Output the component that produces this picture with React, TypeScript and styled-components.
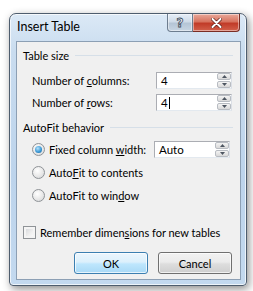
import React from 'react';
import styled, { createGlobalStyle } from 'styled-components';

const GlobalStyle = createGlobalStyle`
  html, body {
    margin: 0;
    padding: 0;
    background: #ffffff;
    overflow: hidden;
  }
  body {
    font-family: Lato, 'Open Sans', sans-serif;
    font-size: 11px;
    color: #000;
  }
`;

const Page = styled.div`
  width: 253px;
  height: 291px;
  padding: 13px 0 0 9px;
  box-sizing: border-box;
`;

const Window = styled.div`
  width: 238px;
  height: 273px;
  box-sizing: border-box;
  border: 1px solid #4e5d6e;
  border-radius: 7px 7px 4px 4px;
  background: linear-gradient(180deg, #dce9f6 0%, #c9dcef 14%, #bdd4ec 60%, #c3d9ef 100%);
  box-shadow: 2px 3px 8px rgba(0, 0, 0, 0.45), inset 0 0 0 1px rgba(255, 255, 255, 0.7);
  display: flex;
  flex-direction: column;
  overflow: hidden;
`;

const TitleBar = styled.div`
  height: 27px;
  flex: none;
  display: flex;
  align-items: flex-start;
  justify-content: space-between;
  padding: 0 6px 0 7px;
`;

const Title = styled.div`
  font-size: 12.5px;
  line-height: 14px;
  margin-top: 6px;
  color: #000;
`;

const CaptionButtons = styled.div`
  display: flex;
`;

const CaptionButton = styled.div<{ $close?: boolean }>`
  width: ${(p) => (p.$close ? 47 : 26)}px;
  height: 18px;
  box-sizing: border-box;
  display: flex;
  align-items: center;
  justify-content: center;
  border: 1px solid ${(p) => (p.$close ? '#7a2d24' : '#6d7d8f')};
  border-top: none;
  border-left-width: ${(p) => (p.$close ? 0 : 1)}px;
  border-radius: ${(p) => (p.$close ? '0 0 4px 0' : '0 0 0 4px')};
  background: ${(p) =>
    p.$close
      ? 'linear-gradient(180deg, #e9a99b 0%, #d7735f 45%, #c13b28 55%, #d2604b 100%)'
      : 'linear-gradient(180deg, #e6eef7 0%, #cfdbe8 45%, #b5c5d6 55%, #c7d5e3 100%)'};
  box-shadow: inset 0 0 0 1px rgba(255, 255, 255, 0.45);
`;

const HelpGlyph = styled.span`
  font-family: 'DejaVu Sans', sans-serif;
  font-weight: bold;
  font-size: 12px;
  line-height: 12px;
  color: #f4f7fa;
  -webkit-text-stroke: 0.8px #3c4a5a;
`;

const Client = styled.div`
  flex: 1;
  min-height: 0;
  margin: 0 5px 5px 6px;
  border: 1px solid #8c9fb4;
  background: #f0f0f0;
  display: flex;
  flex-direction: column;
  padding: 6px 7px 0 6px;
`;

const GroupHeader = styled.div<{ $top: number }>`
  display: flex;
  align-items: center;
  gap: 6px;
  margin-top: ${(p) => p.$top}px;
  height: 14px;
  white-space: nowrap;
  &::after {
    content: '';
    flex: 1;
    height: 1px;
    background: #d6dfe8;
  }
`;

const FieldRow = styled.div<{ $top: number }>`
  display: flex;
  align-items: center;
  margin-top: ${(p) => p.$top}px;
  padding-left: 9px;
  height: 17px;
`;

const FieldLabel = styled.span`
  width: 124px;
  white-space: nowrap;
`;

const RadioRow = styled.div<{ $top: number }>`
  display: flex;
  align-items: center;
  margin-top: ${(p) => p.$top}px;
  padding-left: 9px;
  height: 17px;
`;

const RadioLabel = styled.span<{ $width?: number }>`
  width: ${(p) => (p.$width ? `${p.$width}px` : 'auto')};
  margin-left: 4px;
  white-space: nowrap;
`;

const Radio = styled.span<{ $checked?: boolean }>`
  width: 13px;
  height: 13px;
  box-sizing: border-box;
  border-radius: 50%;
  border: 1px solid #8f9397;
  background: radial-gradient(circle at 40% 35%, #ffffff 0%, #e8e8e8 55%, #cfd2d5 100%);
  display: flex;
  align-items: center;
  justify-content: center;
  flex: none;
  &::after {
    content: '';
    display: ${(p) => (p.$checked ? 'block' : 'none')};
    width: 7px;
    height: 7px;
    border-radius: 50%;
    background: radial-gradient(circle at 40% 35%, #b7e2fb 0%, #3d9ad6 55%, #0f5a92 100%);
  }
`;

const CheckRow = styled.div`
  display: flex;
  align-items: center;
  margin-top: 20px;
  height: 17px;
`;

const CheckLabel = styled.span`
  white-space: nowrap;
`;

const CheckBox = styled.span`
  width: 13px;
  height: 13px;
  box-sizing: border-box;
  border: 1px solid #8f9397;
  background: linear-gradient(135deg, #cfd2d6 0%, #f0f0f0 60%, #ffffff 100%);
  box-shadow: inset 0 0 0 2px #f4f4f4;
  flex: none;
  margin-right: 4px;
`;

const SpinBox = styled.div`
  width: 76px;
  height: 17px;
  box-sizing: border-box;
  border: 1px solid #abadb3;
  border-bottom-color: #e3e9ef;
  border-right-color: #dbdfe6;
  background: #fff;
  display: flex;
  align-items: center;
  padding-left: 4px;
  flex: none;
  font-size: 11.5px;
`;

const SpinValue = styled.div`
  flex: 1;
  display: flex;
  align-items: center;
`;

const Caret = styled.span`
  width: 1px;
  height: 12px;
  background: #000;
  margin-left: 1px;
`;

const SpinButtons = styled.div`
  width: 14px;
  height: 15px;
  display: flex;
  flex-direction: column;
  gap: 1px;
`;

const SpinButton = styled.div`
  flex: 1;
  box-sizing: border-box;
  border: 1px solid #b8bcc2;
  border-radius: 2px;
  background: linear-gradient(180deg, #f4f4f4 0%, #e6e6e6 50%, #d9d9d9 100%);
  display: flex;
  align-items: center;
  justify-content: center;
`;

const ButtonRow = styled.div`
  display: flex;
  justify-content: flex-end;
  gap: 10px;
  margin-top: 11px;
  padding-right: 1px;
`;

const PushButton = styled.div<{ $default?: boolean }>`
  width: 74px;
  height: 22px;
  box-sizing: border-box;
  border-radius: 3px;
  border: 1px solid ${(p) => (p.$default ? '#3c7fb1' : '#707070')};
  background: ${(p) =>
    p.$default
      ? 'linear-gradient(180deg, #ecf6fd 0%, #dcf0fc 45%, #bee6fd 55%, #a8d9f6 100%)'
      : 'linear-gradient(180deg, #f2f2f2 0%, #ebebeb 45%, #dddddd 55%, #cfcfcf 100%)'};
  box-shadow: inset 0 0 0 1px rgba(255, 255, 255, 0.7);
  display: flex;
  align-items: center;
  justify-content: center;
`;

const Arrow = ({ up }: { up?: boolean }) => (
  <svg width="5" height="3" viewBox="0 0 5 3">
    <path d={up ? 'M0 3 L2.5 0 L5 3 Z' : 'M0 0 L2.5 3 L5 0 Z'} fill="#4d5560" />
  </svg>
);

const Spin: React.FC<{ value: string; caret?: boolean }> = ({ value, caret }) => (
  <SpinBox>
    <SpinValue>
      {value}
      {caret && <Caret />}
    </SpinValue>
    <SpinButtons>
      <SpinButton>
        <Arrow up />
      </SpinButton>
      <SpinButton>
        <Arrow />
      </SpinButton>
    </SpinButtons>
  </SpinBox>
);

const CloseGlyph = () => (
  <svg width="11" height="10" viewBox="0 0 11 10">
    <path
      d="M1.5 1 L9.5 9 M9.5 1 L1.5 9"
      stroke="#5a1e16"
      strokeWidth="3.4"
      strokeLinecap="round"
    />
    <path
      d="M1.5 1 L9.5 9 M9.5 1 L1.5 9"
      stroke="#ffffff"
      strokeWidth="2"
      strokeLinecap="round"
    />
  </svg>
);

const App: React.FC = () => {
  return (
    <Page>
      <GlobalStyle />
      <Window>
        <TitleBar>
          <Title>Insert Table</Title>
          <CaptionButtons>
            <CaptionButton>
              <HelpGlyph>?</HelpGlyph>
            </CaptionButton>
            <CaptionButton $close>
              <CloseGlyph />
            </CaptionButton>
          </CaptionButtons>
        </TitleBar>
        <Client>
          <GroupHeader $top={0}>Table size</GroupHeader>
          <FieldRow $top={10}>
            <FieldLabel>
              Number of <u>c</u>olumns:
            </FieldLabel>
            <Spin value="4" />
          </FieldRow>
          <FieldRow $top={5}>
            <FieldLabel>
              Number of <u>r</u>ows:
            </FieldLabel>
            <Spin value="4" caret />
          </FieldRow>
          <GroupHeader $top={9}>AutoFit behavior</GroupHeader>
          <RadioRow $top={7}>
            <Radio $checked />
            <RadioLabel $width={105}>
              Fixed column <u>w</u>idth:
            </RadioLabel>
            <Spin value="Auto" />
          </RadioRow>
          <RadioRow $top={6}>
            <Radio />
            <RadioLabel>
              Auto<u>F</u>it to contents
            </RadioLabel>
          </RadioRow>
          <RadioRow $top={6}>
            <Radio />
            <RadioLabel>
              AutoFit to win<u>d</u>ow
            </RadioLabel>
          </RadioRow>
          <CheckRow>
            <CheckBox />
            <CheckLabel>
              Remember dimen<u>s</u>ions for new tables
            </CheckLabel>
          </CheckRow>
          <ButtonRow>
            <PushButton $default>OK</PushButton>
            <PushButton>Cancel</PushButton>
          </ButtonRow>
        </Client>
      </Window>
    </Page>
  );
};

export default App;
